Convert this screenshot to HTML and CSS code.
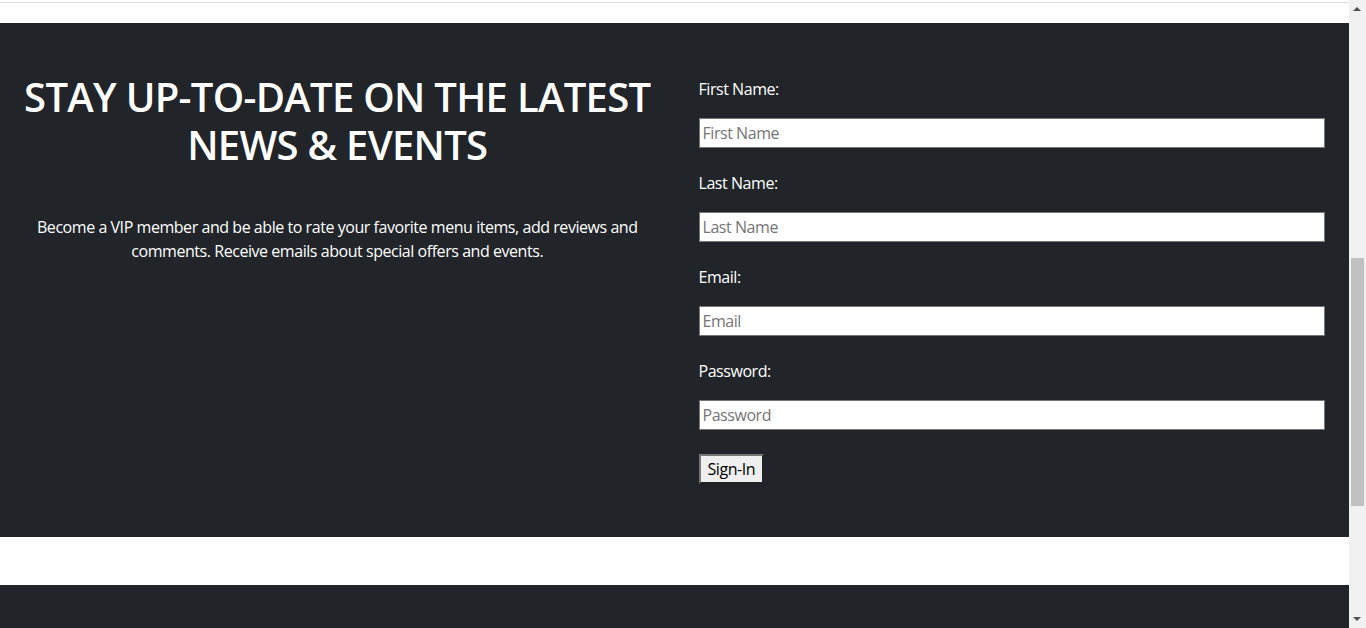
FILE: index.html
```html
<!DOCTYPE html>
<html lang="en">
<head>
<meta charset="utf-8">
<title>VIP Sign-In</title>
<link rel="stylesheet" href="styles.css">
</head>
<body>
<div class="page">
  <div class="topbar"></div>
  <section class="signup">
    <div class="col col-info">
      <h1 class="title"><span class="title-line">STAY UP-TO-DATE ON THE LATEST</span><span class="title-line">NEWS &amp; EVENTS</span></h1>
      <p class="lead">Become a VIP member and be able to rate your favorite menu items, add reviews and comments. Receive emails about special offers and events.</p>
    </div>
    <div class="col col-form">
      <form class="form">
        <div class="field">
          <label class="label" for="fn">First Name:</label>
          <input class="input" id="fn" type="text" placeholder="First Name">
        </div>
        <div class="field">
          <label class="label" for="ln">Last Name:</label>
          <input class="input" id="ln" type="text" placeholder="Last Name">
        </div>
        <div class="field">
          <label class="label" for="em">Email:</label>
          <input class="input" id="em" type="email" placeholder="Email">
        </div>
        <div class="field">
          <label class="label" for="pw">Password:</label>
          <input class="input" id="pw" type="password" placeholder="Password">
        </div>
        <button class="btn" type="button">Sign-In</button>
      </form>
    </div>
  </section>
  <div class="spacer"></div>
  <section class="footer-dark"></section>
</div>
<div class="scrollbar">
  <span class="arrow arrow-up"></span>
  <span class="thumb"></span>
  <span class="arrow arrow-down"></span>
</div>
</body>
</html>
```
FILE: styles.css
```css
html, body {
  margin: 0;
  padding: 0;
  height: 100%;
  overflow: hidden;
  background: #fff;
}
body {
  font-family: "Open Sans", "Noto Sans", sans-serif;
  font-size: 16px;
  line-height: 24px;
  letter-spacing: -0.45px;
  color: #fff;
}
.page {
  width: 1349px;
}
.topbar {
  height: 2px;
  border-bottom: 1px solid #dedede;
  margin-bottom: 20px;
}
.signup {
  background: #212529;
  display: grid;
  grid-template-columns: 1fr 1fr;
  padding: 50px 0 53px;
}
.col {
  padding: 0 24px;
}
.col-form {
  padding-top: 4px;
}
.title {
  margin: 0;
  font-size: 40px;
  line-height: 48px;
  font-weight: 600;
  letter-spacing: -0.7px;
  text-align: center;
  white-space: nowrap;
}
.title-line {
  display: block;
}
.lead {
  margin: 46px 0 0;
  text-align: center;
}
.form {
  display: flex;
  flex-direction: column;
  align-items: flex-start;
}
.field {
  display: flex;
  flex-direction: column;
  width: 100%;
  margin-bottom: 23px;
}
.field:last-of-type {
  margin-bottom: 24px;
}
.label {
  display: block;
  margin-bottom: 17px;
}
.input {
  box-sizing: border-box;
  width: 100%;
  height: 30px;
  margin: 0;
  padding: 2px 3px;
  border: 1px solid #767676;
  border-radius: 0;
  background: #fff;
  font: inherit;
  letter-spacing: inherit;
  color: #000;
  outline: none;
}
.input::placeholder {
  color: #757575;
}
.btn {
  box-sizing: border-box;
  height: 30px;
  margin: 0;
  padding: 0 7px;
  border: 2px outset #767676;
  border-radius: 0;
  background: #efefef;
  font: inherit;
  letter-spacing: inherit;
  color: #000;
}
.spacer {
  height: 48px;
}
.footer-dark {
  background: #212529;
  height: 200px;
}
.scrollbar {
  position: fixed;
  top: 0;
  right: 0;
  width: 17px;
  height: 100%;
  background: #f1f1f1;
}
.thumb {
  position: absolute;
  left: 2px;
  right: 2px;
  top: 258px;
  height: 248px;
  background: #c1c1c1;
}
.arrow {
  position: absolute;
  left: 4px;
  width: 0;
  height: 0;
  border-left: 4px solid transparent;
  border-right: 4px solid transparent;
}
.arrow-up {
  top: 7px;
  border-bottom: 4px solid #505050;
}
.arrow-down {
  bottom: 7px;
  border-top: 4px solid #505050;
}
```
